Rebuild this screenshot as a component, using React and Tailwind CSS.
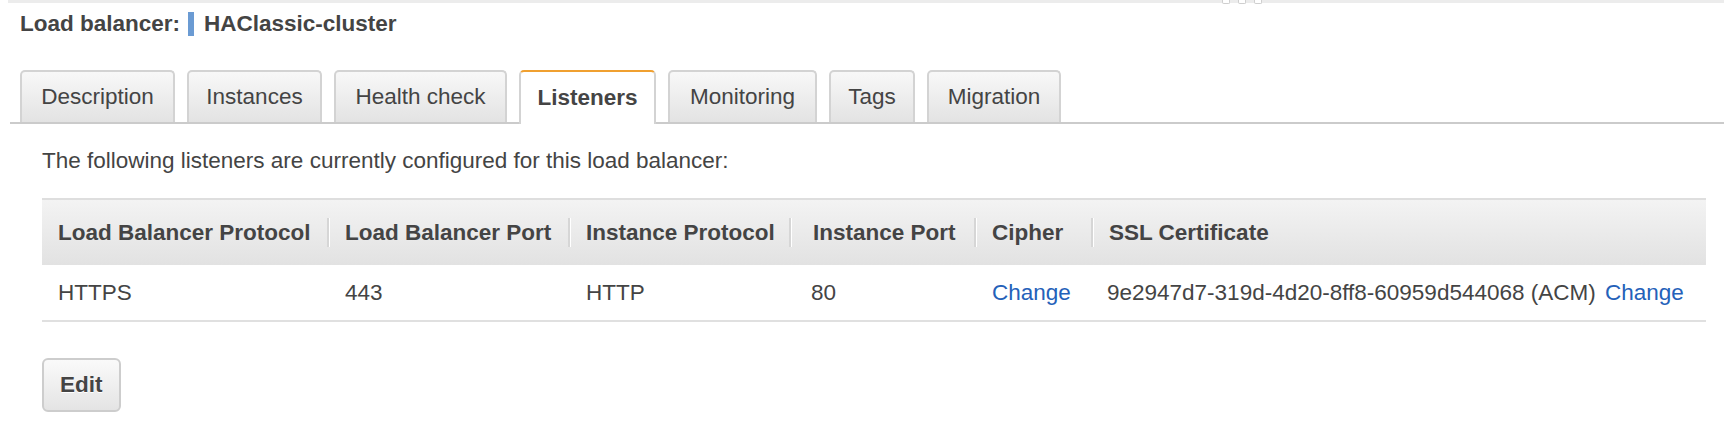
import React from "react"

const tabs = [
  { label: "Description", w: "w-[155px]" },
  { label: "Instances", w: "w-[135px]" },
  { label: "Health check", w: "w-[173px]" },
  { label: "Listeners", w: "w-[137px]" },
  { label: "Monitoring", w: "w-[149px]" },
  { label: "Tags", w: "w-[86px]" },
  { label: "Migration", w: "w-[134px]" },
]

const columns = [
  { label: "Load Balancer Protocol", w: "w-[285px]", pad: "pl-4" },
  { label: "Load Balancer Port", w: "w-[241px]", pad: "pl-[15px]" },
  { label: "Instance Protocol", w: "w-[221px]", pad: "pl-[15px]" },
  { label: "Instance Port", w: "w-[185px]", pad: "pl-[21px]" },
  { label: "Cipher", w: "w-[117px]", pad: "pl-[15px]" },
  { label: "SSL Certificate", w: "flex-1", pad: "pl-[15px]" },
]

function Tab({ label, w, active }) {
  if (active) {
    return (
      <div className={`${w} h-[54px] -mb-[2px] flex items-center justify-center bg-white border-x-2 border-t-2 border-x-[#d3d3d3] border-t-[#f0a030] rounded-t-[5px] font-bold`}>
        {label}
      </div>
    )
  }
  return (
    <div className={`${w} h-[52px] flex items-center justify-center bg-gradient-to-b from-[#f8f8f8] to-[#e3e3e3] border-x-2 border-t-2 border-[#d3d3d3] rounded-t-[5px]`}>
      {label}
    </div>
  )
}

function Separator() {
  return <div className="h-[29px] w-[3px] border-l-2 border-[#d6d6d6] bg-white shrink-0" />
}

export default function App() {
  return (
    <div className="w-[1724px] h-[442px] bg-white text-[#444] text-[22.5px] font-['Liberation_Sans',Arial,sans-serif] overflow-hidden">
      <div className="relative ml-2 h-[3px] bg-[#ececec]">
        <div className="absolute left-[1214px] top-0 flex gap-[8px]">
          <span className="w-[8px] h-[4px] border-x border-b border-[#cfcfcf] rounded-b-[2px] bg-white" />
          <span className="w-[8px] h-[4px] border-x border-b border-[#cfcfcf] rounded-b-[2px] bg-white" />
          <span className="w-[8px] h-[4px] border-x border-b border-[#cfcfcf] rounded-b-[2px] bg-white" />
        </div>
      </div>

      <div className="h-[42px] pl-5 flex items-center font-bold">
        <span>Load balancer:</span>
        <span className="ml-[8px] mr-[10px] w-[6px] h-[24px] bg-[#6b9bd3]" />
        <span>HAClassic-cluster</span>
      </div>

      <div className="mt-[25px] ml-[10px] pl-[10px] flex items-end gap-3 border-b-2 border-[#cbcbcb]">
        {tabs.map(t => (
          <Tab key={t.label} label={t.label} w={t.w} active={t.label === "Listeners"} />
        ))}
      </div>

      <div className="pl-[42px] pr-[18px]">
        <p className="mt-[24px] leading-[26px]">
          The following listeners are currently configured for this load balancer:
        </p>

        <div className="mt-[24px]">
          <div className="h-[67px] flex items-center border-t-2 border-[#dedede] bg-gradient-to-b from-[#f3f3f3] to-[#e2e2e2] font-bold">
            {columns.map((c, i) => (
              <div key={c.label} className={`${c.w} flex items-center`}>
                {i > 0 && <Separator />}
                <span className={c.pad}>{c.label}</span>
              </div>
            ))}
          </div>
          <div className="h-[57px] flex items-center border-b-2 border-[#e0e0e0]">
            <div className="w-[285px] pl-4">HTTPS</div>
            <div className="w-[241px] pl-[18px]">443</div>
            <div className="w-[221px] pl-[18px]">HTTP</div>
            <div className="w-[185px] pl-[22px]">80</div>
            <div className="w-[117px] pl-[18px]">
              <a className="text-[#2461b9]">Change</a>
            </div>
            <div className="flex-1 pl-[16px]">
              9e2947d7-319d-4d20-8ff8-60959d544068 (ACM){" "}
              <a className="ml-[3px] text-[#2461b9]">Change</a>
            </div>
          </div>
        </div>

        <button className="mt-[36px] h-[54px] px-[16px] rounded-[6px] border-2 border-[#cdcdcd] bg-gradient-to-b from-[#fafafa] to-[#e4e4e4] font-bold text-[#444] [text-shadow:0_1px_0_#fff]">
          Edit
        </button>
      </div>
    </div>
  )
}
